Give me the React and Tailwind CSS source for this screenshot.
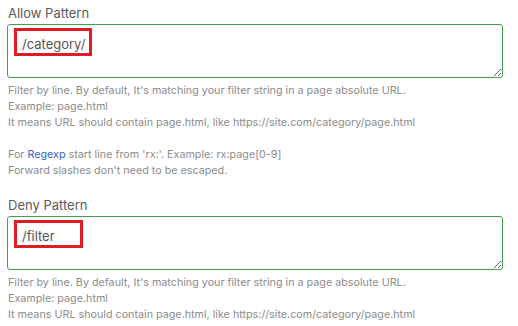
import React from "react";

function Help({ extra }) {
  return (
    <div className="mt-[5px] pl-[8px] text-[10.75px] leading-[16px] text-[#8c8c8c]">
      <div>Filter by line. By default, It's matching your filter string in a page absolute URL.</div>
      <div>Example: page.html</div>
      <div>It means URL should contain page.html, like https://site.com/category/page.html</div>
      {extra && (
        <>
          <div className="h-[16px]" />
          <div>
            For <span className="text-[#3b5ec6]">Regexp</span> start line from 'rx:'. Example: rx:page[0-9]
          </div>
          <div>Forward slashes don't need to be escaped.</div>
        </>
      )}
    </div>
  );
}

function Field({ label, value, boxW }) {
  return (
    <div>
      <div className="pl-[8px] text-[13px] leading-[18px] text-[#5a5a5a] font-['Inter',sans-serif]">{label}</div>
      <div className="relative mt-[2px] ml-[7px] w-[496px]">
        <textarea
          readOnly
          value={value}
          className="block w-full h-[54px] rounded-[3px] border border-[#43a04f] bg-white pl-[14px] pt-[9px] text-[13px] leading-[20px] text-[#555] outline-none font-['Inter',sans-serif]"
        />
        <div
          className="pointer-events-none absolute left-[7px] top-[4px] h-[28px] border-[3px] border-[#e01b24]"
          style={{ width: boxW }}
        />
      </div>
    </div>
  );
}

export default function App() {
  return (
    <div className="w-[518px] h-[326px] bg-white overflow-hidden pt-[4px] font-['Inter',sans-serif]">
      <Field label="Allow Pattern" value="/category/" boxW={78} />
      <Help extra />
      <div className="h-[17px]" />
      <Field label="Deny Pattern" value="/filter" boxW={69} />
      <Help />
    </div>
  );
}
